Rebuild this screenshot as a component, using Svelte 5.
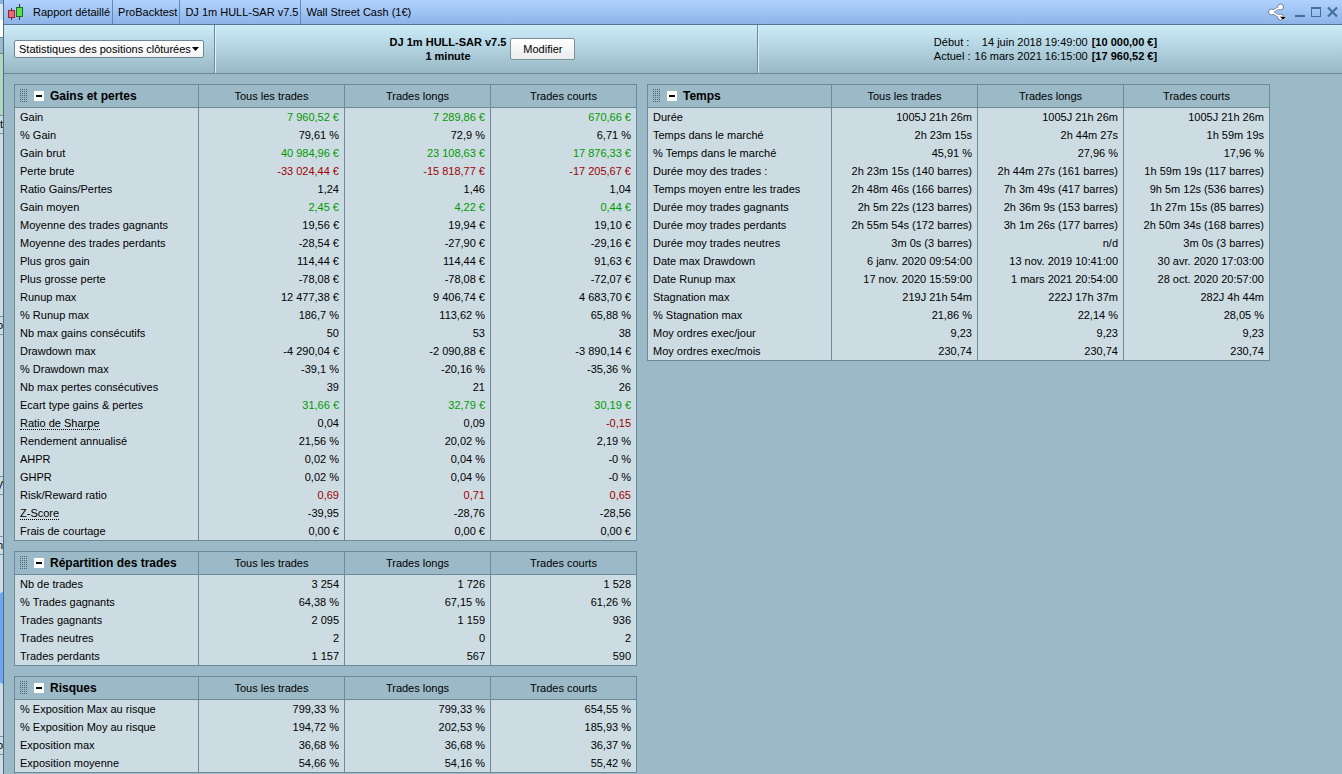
<script lang="ts">
  type Row = { label: string; values: string[]; tones?: string; hint?: boolean };
  type Section = { id: string; title: string; rows: Row[] };

  const columns = ["Tous les trades", "Trades longs", "Trades courts"];
  const tabs = ["Rapport détaillé", "ProBacktest", "DJ 1m HULL-SAR v7.5", "Wall Street Cash (1€)"];

  // tones: one letter per column, g = gain, r = loss, - = neutral
  const row = (label: string, a: string, b: string, c: string, tones = "---", hint = false): Row => ({
    label,
    values: [a, b, c],
    tones,
    hint,
  });

  const left: Section[] = [
    {
      id: "gains",
      title: "Gains et pertes",
      rows: [
        row("Gain", "7 960,52 €", "7 289,86 €", "670,66 €", "ggg"),
        row("% Gain", "79,61 %", "72,9 %", "6,71 %"),
        row("Gain brut", "40 984,96 €", "23 108,63 €", "17 876,33 €", "ggg"),
        row("Perte brute", "-33 024,44 €", "-15 818,77 €", "-17 205,67 €", "rrr"),
        row("Ratio Gains/Pertes", "1,24", "1,46", "1,04"),
        row("Gain moyen", "2,45 €", "4,22 €", "0,44 €", "ggg"),
        row("Moyenne des trades gagnants", "19,56 €", "19,94 €", "19,10 €"),
        row("Moyenne des trades perdants", "-28,54 €", "-27,90 €", "-29,16 €"),
        row("Plus gros gain", "114,44 €", "114,44 €", "91,63 €"),
        row("Plus grosse perte", "-78,08 €", "-78,08 €", "-72,07 €"),
        row("Runup max", "12 477,38 €", "9 406,74 €", "4 683,70 €"),
        row("% Runup max", "186,7 %", "113,62 %", "65,88 %"),
        row("Nb max gains consécutifs", "50", "53", "38"),
        row("Drawdown max", "-4 290,04 €", "-2 090,88 €", "-3 890,14 €"),
        row("% Drawdown max", "-39,1 %", "-20,16 %", "-35,36 %"),
        row("Nb max pertes consécutives", "39", "21", "26"),
        row("Ecart type gains & pertes", "31,66 €", "32,79 €", "30,19 €", "ggg"),
        row("Ratio de Sharpe", "0,04", "0,09", "-0,15", "--r", true),
        row("Rendement annualisé", "21,56 %", "20,02 %", "2,19 %"),
        row("AHPR", "0,02 %", "0,04 %", "-0 %"),
        row("GHPR", "0,02 %", "0,04 %", "-0 %"),
        row("Risk/Reward ratio", "0,69", "0,71", "0,65", "rrr"),
        row("Z-Score", "-39,95", "-28,76", "-28,56", "---", true),
        row("Frais de courtage", "0,00 €", "0,00 €", "0,00 €"),
      ],
    },
    {
      id: "repartition",
      title: "Répartition des trades",
      rows: [
        row("Nb de trades", "3 254", "1 726", "1 528"),
        row("% Trades gagnants", "64,38 %", "67,15 %", "61,26 %"),
        row("Trades gagnants", "2 095", "1 159", "936"),
        row("Trades neutres", "2", "0", "2"),
        row("Trades perdants", "1 157", "567", "590"),
      ],
    },
    {
      id: "risques",
      title: "Risques",
      rows: [
        row("% Exposition Max au risque", "799,33 %", "799,33 %", "654,55 %"),
        row("% Exposition Moy au risque", "194,72 %", "202,53 %", "185,93 %"),
        row("Exposition max", "36,68 %", "36,68 %", "36,37 %"),
        row("Exposition moyenne", "54,66 %", "54,16 %", "55,42 %"),
      ],
    },
  ];

  const right: Section[] = [
    {
      id: "temps",
      title: "Temps",
      rows: [
        row("Durée", "1005J 21h 26m", "1005J 21h 26m", "1005J 21h 26m"),
        row("Temps dans le marché", "2h 23m 15s", "2h 44m 27s", "1h 59m 19s"),
        row("% Temps dans le marché", "45,91 %", "27,96 %", "17,96 %"),
        row("Durée moy des trades :", "2h 23m 15s (140 barres)", "2h 44m 27s (161 barres)", "1h 59m 19s (117 barres)"),
        row("Temps moyen entre les trades", "2h 48m 46s (166 barres)", "7h 3m 49s (417 barres)", "9h 5m 12s (536 barres)"),
        row("Durée moy trades gagnants", "2h 5m 22s (123 barres)", "2h 36m 9s (153 barres)", "1h 27m 15s (85 barres)"),
        row("Durée moy trades perdants", "2h 55m 54s (172 barres)", "3h 1m 26s (177 barres)", "2h 50m 34s (168 barres)"),
        row("Durée moy trades neutres", "3m 0s (3 barres)", "n/d", "3m 0s (3 barres)"),
        row("Date max Drawdown", "6 janv. 2020 09:54:00", "13 nov. 2019 10:41:00", "30 avr. 2020 17:03:00"),
        row("Date Runup max", "17 nov. 2020 15:59:00", "1 mars 2021 20:54:00", "28 oct. 2020 20:57:00"),
        row("Stagnation max", "219J 21h 54m", "222J 17h 37m", "282J 4h 44m"),
        row("% Stagnation max", "21,86 %", "22,14 %", "28,05 %"),
        row("Moy ordres exec/jour", "9,23", "9,23", "9,23"),
        row("Moy ordres exec/mois", "230,74", "230,74", "230,74"),
      ],
    },
  ];

  // slice of the window lying behind this one
  const behind = [
    { kind: "blue", h: 4 },
    { kind: "pale", h: 16 },
    { kind: "white", h: 17 },
    { kind: "grey", h: 16 },
    { kind: "green", h: 62 },
    { kind: "label", h: 19, text: "t" },
    { kind: "plain", h: 182 },
    { kind: "label", h: 19, text: "o" },
    { kind: "plain", h: 141 },
    { kind: "label", h: 19, text: "V" },
    { kind: "plain", h: 41 },
    { kind: "label", h: 19, text: "n" },
    { kind: "plain", h: 37 },
    { kind: "blob", h: 92 },
    { kind: "plain", h: 52 },
    { kind: "label", h: 19, text: "jo" },
  ];

  let collapsed: Record<string, boolean> = $state({});
</script>

{#snippet sectionTable(section: Section)}
  <table>
    <colgroup>
      <col class="col-label" />
      <col />
      <col />
      <col />
    </colgroup>
    <thead>
      <tr>
        <th scope="col">
          <div class="section-head">
            <svg class="grip" width="8" height="14" viewBox="0 0 8 14" aria-hidden="true">
              {#each [0, 2, 4, 6, 8, 10, 12] as y}
                {#each [0, 2, 4, 6] as x}
                  <rect {x} {y} width="1" height="1" />
                {/each}
              {/each}
            </svg>
            <button
              class="toggle"
              aria-label="Réduire {section.title}"
              onclick={() => (collapsed[section.id] = !collapsed[section.id])}
            >
              <svg width="10" height="10" viewBox="0 0 10 10" aria-hidden="true">
                <rect x="2" y="4" width="6" height="2" />
                {#if collapsed[section.id]}
                  <rect x="4" y="2" width="2" height="6" />
                {/if}
              </svg>
            </button>
            <span class="section-title">{section.title}</span>
          </div>
        </th>
        {#each columns as column}
          <th scope="col">{column}</th>
        {/each}
      </tr>
    </thead>
    {#if !collapsed[section.id]}
      <tbody>
        {#each section.rows as r}
          <tr>
            <th scope="row"><span class:hint={r.hint}>{r.label}</span></th>
            {#each r.values as value, i}
              <td class:gain={r.tones?.[i] === "g"} class:loss={r.tones?.[i] === "r"}>{value}</td>
            {/each}
          </tr>
        {/each}
      </tbody>
    {/if}
  </table>
{/snippet}

<div class="desktop">
  <div class="behind" aria-hidden="true">
    {#each behind as part}
      <div class={part.kind} style="height: {part.h}px">{part.text ?? ""}</div>
    {/each}
  </div>

  <div class="window">
    <header class="titlebar">
      <svg class="logo" width="17" height="17" viewBox="0 0 17 17" aria-hidden="true">
        <path d="M3.5 4v12M11.500 0v16" stroke="#333" />
        <rect x="0.5" y="6.500" width="6" height="7" fill="#f0676f" stroke="#a3202c" />
        <rect x="8.500" y="3.500" width="6" height="9" fill="#5be052" stroke="#14751a" />
      </svg>
      <ul class="tabs">
        {#each tabs as tab}
          <li>{tab}</li>
        {/each}
      </ul>
      <div class="window-actions">
        <button class="share" aria-label="Partager">
          <svg width="20" height="18" viewBox="0 0 20 18">
            <path d="M13.500 4L4.500 9L13.500 14" fill="none" stroke="#6d8298" stroke-width="3" />
            <g fill="#fff" stroke="#6d8298" stroke-width="1">
              <circle cx="13.500" cy="4" r="3" />
              <circle cx="4.500" cy="9" r="3" />
              <circle cx="13.500" cy="14" r="3" />
            </g>
            <path d="M13.500 4L4.500 9L13.500 14" fill="none" stroke="#fff" stroke-width="1.500" />
            <path d="M12.500 13.500h7l-3.500 3.500z" fill="#000" stroke="#fff" stroke-width="0.5" />
          </svg>
        </button>
        <button aria-label="Réduire la fenêtre">
          <svg width="10" height="12" viewBox="0 0 10 12"><rect y="9" width="10" height="2" fill="#44709f" /></svg>
        </button>
        <button aria-label="Agrandir">
          <svg width="10" height="12" viewBox="0 0 10 12">
            <path d="M0 1h10v10H0zM1 3v7h8V3z" fill="#44709f" fill-rule="evenodd" />
          </svg>
        </button>
        <button aria-label="Fermer">
          <svg width="11" height="12" viewBox="0 0 11 12">
            <path d="M1 1.500L10 10.500M10 1.500L1 10.500" stroke="#44709f" stroke-width="2.200" />
          </svg>
        </button>
      </div>
    </header>

    <div class="toolbar">
      <div class="picker">
        <select aria-label="Statistiques">
          <option>Statistiques des positions clôturées</option>
          <option>Liste des positions clôturées</option>
        </select>
        <svg width="7" height="4" viewBox="0 0 7 4" aria-hidden="true"><path d="M0 0h7L3.500 4z" /></svg>
      </div>
      <div class="strategy">
        <div class="strategy-name">DJ 1m HULL-SAR v7.5<br />1 minute</div>
        <button class="edit">Modifier</button>
      </div>
      <div class="period">
        <dl>
          <dt>Début :</dt>
          <dd>14 juin 2018 19:49:00</dd>
          <dd><b>[10 000,00 €]</b></dd>
          <dt>Actuel :</dt>
          <dd>16 mars 2021 16:15:00</dd>
          <dd><b>[17 960,52 €]</b></dd>
        </dl>
      </div>
    </div>

    <main>
      <div class="stack">
        {#each left as section}
          {@render sectionTable(section)}
        {/each}
      </div>
      <div class="stack">
        {#each right as section}
          {@render sectionTable(section)}
        {/each}
      </div>
    </main>
  </div>
</div>

<style>
  :global(body) {
    margin: 0;
    background: #9bb9c6;
  }

  .desktop {
    --line: #6c8b99;
    display: flex;
    min-height: 100vh;
    font-family: "Liberation Sans", Arial, sans-serif;
    font-size: 11px;
    line-height: 14px;
    color: #000;
  }
  button,
  select {
    font: inherit;
    color: inherit;
    margin: 0;
    padding: 0;
    box-sizing: border-box;
  }
  svg {
    display: block;
  }

  .behind {
    flex: none;
    width: 3px;
    overflow: hidden;
    background: #cddce3;
  }
  .behind > div {
    box-sizing: border-box;
    display: flex;
    justify-content: flex-end;
    overflow: hidden;
    line-height: 17px;
  }
  .behind .blue {
    background: #8fb4d8;
  }
  .behind .pale {
    background: #d9e9f4;
  }
  .behind .white {
    background: #fff;
  }
  .behind .grey {
    background: #9bb9c6;
    border-top: 1px solid #6c8b99;
  }
  .behind .green {
    background: #b0d8bb;
    border-top: 1px solid #6c8b99;
  }
  .behind .label {
    border: solid #7d919b;
    border-width: 1px 0;
  }
  .behind .blob {
    background: #6ea4f4;
    border-radius: 3px 0 0 3px;
  }

  .window {
    flex: 1;
    min-width: 0;
    border-left: 1px solid #4b6c82;
    background: #9bb9c6;
  }

  .titlebar {
    display: flex;
    align-items: stretch;
    height: 24px;
    padding: 0 4px;
    border-bottom: 1px solid #54748f;
    background: linear-gradient(#b0d2ff, #8db4e6);
  }
  .logo {
    align-self: center;
  }
  .tabs {
    display: flex;
    margin: 0;
    padding: 0 0 0 3px;
    list-style: none;
    line-height: 24px;
    white-space: nowrap;
  }
  .tabs li {
    padding: 0 2px 0 5px;
    border-right: 1px solid #6487b4;
  }
  .tabs li:last-child {
    border-right: none;
  }
  .window-actions {
    display: flex;
    align-items: center;
    gap: 6px;
    margin-left: auto;
  }
  .window-actions button {
    border: none;
    background: none;
  }
  .window-actions .share {
    margin-right: 2px;
  }

  .toolbar {
    display: grid;
    grid-template-columns: 211px 543fr 584fr;
    height: 48px;
    border-bottom: 1px solid var(--line);
    background: linear-gradient(#cdecf9, #98b8c5);
  }
  .toolbar > div {
    box-sizing: border-box;
    display: flex;
    align-items: center;
    justify-content: center;
  }
  .toolbar > .picker,
  .toolbar > .strategy {
    border-right: 1px solid var(--line);
  }
  .toolbar > .strategy,
  .toolbar > .period {
    border-left: 1px solid #dff2fa;
  }
  .picker svg {
    margin: 0 5px 0 -12px;
    pointer-events: none;
  }
  .picker select {
    width: 190px;
    height: 18px;
    padding: 0 4px;
    appearance: none;
    border: 1px solid #6f8792;
    border-radius: 2px;
    background: linear-gradient(#fff, #f3f3f3);
  }
  .toolbar > .strategy {
    gap: 4px;
    padding-right: 8px;
  }
  .strategy-name {
    text-align: center;
    font-weight: bold;
  }
  .edit {
    width: 65px;
    height: 22px;
    border: 1px solid #7d919b;
    border-radius: 2px;
    background: linear-gradient(#fff, #ececec);
  }
  .toolbar > .period {
    padding-right: 10px;
  }
  dl {
    display: grid;
    grid-template-columns: auto auto auto;
    column-gap: 4px;
    margin: 0;
  }
  dd {
    margin: 0;
    text-align: right;
  }

  main {
    display: flex;
    align-items: flex-start;
    gap: 10px;
    padding: 10px 10px 1px;
  }
  .stack {
    display: flex;
    flex-direction: column;
    gap: 10px;
  }

  table {
    width: 623px;
    table-layout: fixed;
    border: 1px solid var(--line);
    border-collapse: separate;
    border-spacing: 0;
    background: #cddce3;
    white-space: nowrap;
  }
  .col-label {
    width: 183px;
  }
  th,
  td {
    box-sizing: border-box;
    height: 18px;
    padding: 0 5px;
    font-weight: normal;
  }
  th + th,
  td {
    border-left: 1px solid var(--line);
  }
  thead th {
    height: 23px;
    border-bottom: 1px solid var(--line);
    background: #9bb9c6;
  }
  tbody th {
    text-align: left;
  }
  td {
    text-align: right;
  }
  .gain {
    color: #009a00;
  }
  .loss {
    color: #a00000;
  }
  .hint {
    border-bottom: 1px dotted #000;
  }

  .section-head {
    display: flex;
    align-items: center;
  }
  .grip {
    fill: #456371;
  }
  .toggle {
    margin: 0 6px;
    border: none;
    background: #fff;
  }
  .section-title {
    font-size: 12px;
    font-weight: bold;
  }
</style>
